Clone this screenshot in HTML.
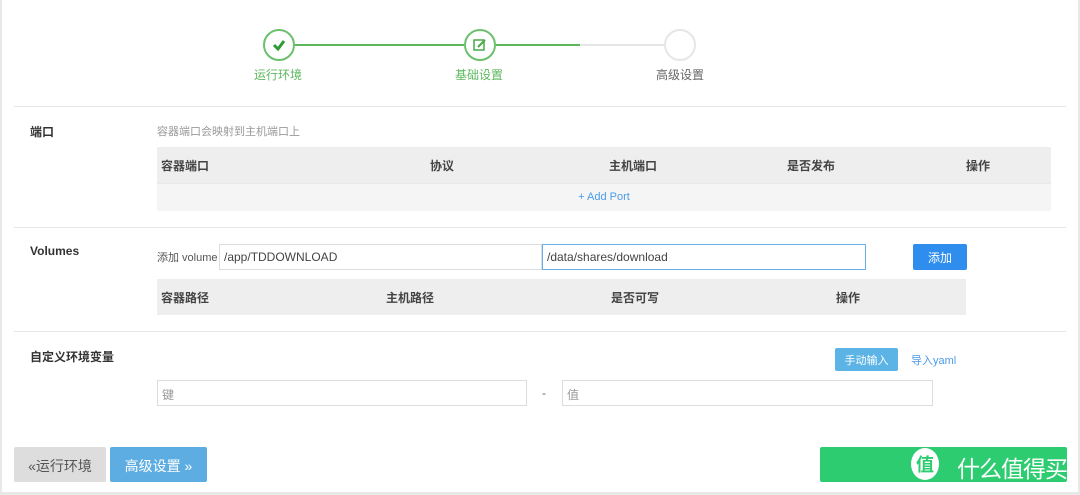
<!DOCTYPE html>
<html><head><meta charset="utf-8"><style>
*{box-sizing:border-box;margin:0;padding:0}
body{width:1080px;height:495px;background:#fff;font-family:"Liberation Sans","Noto Sans CJK SC",sans-serif;font-size:12px;color:#333;position:relative;overflow:hidden}
.a{position:absolute}
.hr{position:absolute;left:14px;width:1052px;height:1px;background:#e6e6e6}
.lbl{position:absolute;left:30px;font-weight:bold;font-size:12px;color:#333}
.th{position:absolute;background:#eee;font-weight:bold;color:#444}
.th span{position:absolute;top:10px}
.inp{position:absolute;border:1px solid #ddd;background:#fff;height:26px;padding:5px 4px;font-size:12px;color:#444}
.btn{position:absolute;color:#fff;text-align:center;border-radius:2px}
</style></head><body>
<div class="a" style="left:0;top:0;width:2px;height:495px;background:#e8e8e8"></div>
<div class="a" style="right:0;top:0;width:2px;height:495px;background:#e8e8e8"></div>
<!-- steps -->
<div class="a" style="left:294px;top:44px;width:170px;height:2px;background:#5cb85c"></div>
<div class="a" style="left:496px;top:44px;width:84px;height:2px;background:#5cb85c"></div>
<div class="a" style="left:580px;top:44px;width:84px;height:2px;background:#e6e6e6"></div>
<div class="a" style="left:263px;top:29px;width:32px;height:32px;border:2px solid #6cc06c;border-radius:50%;background:#fff"></div>
<svg class="a" style="left:270px;top:36px" width="18" height="18"><path d="M4 9 L8 13 L14 5" stroke="#2e9b35" stroke-width="3" fill="none"/></svg>
<div class="a" style="left:464px;top:29px;width:32px;height:32px;border:2px solid #6cc06c;border-radius:50%;background:#fff"></div>
<svg class="a" style="left:472px;top:37px" width="16" height="16"><rect x="2" y="3" width="10" height="10" stroke="#4aa84a" stroke-width="1.5" fill="none"/><path d="M6 10 L13 3" stroke="#4aa84a" stroke-width="2"/></svg>
<div class="a" style="left:664px;top:29px;width:32px;height:32px;border:2px solid #e6e6e6;border-radius:50%;background:#fff"></div>
<div class="a" style="left:254px;top:66px;color:#5cb85c;font-size:12px">运行环境</div>
<div class="a" style="left:455px;top:66px;color:#5cb85c;font-size:12px">基础设置</div>
<div class="a" style="left:656px;top:66px;color:#666;font-size:12px">高级设置</div>
<div class="hr" style="top:106px"></div>
<!-- ports -->
<div class="lbl" style="top:123px">端口</div>
<div class="a" style="left:157px;top:123px;color:#999;font-size:11px">容器端口会映射到主机端口上</div>
<div class="th" style="left:157px;top:147px;width:894px;height:36px"><span style="left:4px">容器端口</span><span style="left:273px">协议</span><span style="left:452px">主机端口</span><span style="left:630px">是否发布</span><span style="left:809px">操作</span></div>
<div class="a" style="left:157px;top:183px;width:894px;height:28px;background:#f5f5f5;border-top:1px solid #e8e8e8;text-align:center;color:#4a9be8;padding-top:7px;font-size:11px">+ Add Port</div>
<div class="hr" style="top:227px"></div>
<!-- volumes -->
<div class="lbl" style="top:244px">Volumes</div>
<div class="a" style="left:157px;top:249px;color:#555;font-size:11px">添加 volume</div>
<div class="inp" style="left:219px;top:244px;width:323px">/app/TDDOWNLOAD</div>
<div class="inp" style="left:542px;top:244px;width:324px;border-color:#66afe9">/data/shares/download</div>
<div class="btn" style="left:913px;top:244px;width:54px;height:26px;background:#2e8ded;padding-top:5px">添加</div>
<div class="th" style="left:157px;top:279px;width:809px;height:36px"><span style="left:4px">容器路径</span><span style="left:229px">主机路径</span><span style="left:454px">是否可写</span><span style="left:679px">操作</span></div>
<div class="hr" style="top:331px"></div>
<!-- env -->
<div class="lbl" style="top:348px">自定义环境变量</div>
<div class="btn" style="left:835px;top:348px;width:63px;height:23px;background:#5bb3e6;padding-top:4px;font-size:11px">手动输入</div>
<div class="a" style="left:911px;top:352px;color:#4a9be8;font-size:11px">导入yaml</div>
<div class="inp" style="left:157px;top:380px;width:370px;color:#999">键</div>
<div class="a" style="left:542px;top:386px;color:#666">-</div>
<div class="inp" style="left:562px;top:380px;width:371px;color:#999">值</div>
<!-- bottom -->
<div class="btn" style="left:14px;top:447px;width:92px;height:35px;background:#ddd;color:#555;font-size:14px;padding-top:9px">«运行环境</div>
<div class="btn" style="left:110px;top:447px;width:97px;height:35px;background:#5dade2;font-size:14px;padding-top:9px">高级设置 »</div>
<div class="btn" style="left:820px;top:447px;width:247px;height:35px;background:#2ecc71;font-size:23px;padding-top:3px;text-align:right;padding-right:0;letter-spacing:-1px;color:#fff">什么值得买</div>
<div class="a" style="left:911px;top:448px;width:28px;height:32px;border-radius:50%;background:#fff;color:#2ecc71;font-size:18px;text-align:center;padding-top:3px;font-weight:bold">值</div>
<div class="a" style="left:0;top:492px;width:1080px;height:3px;background:#e8e8e8"></div>
</body></html>
